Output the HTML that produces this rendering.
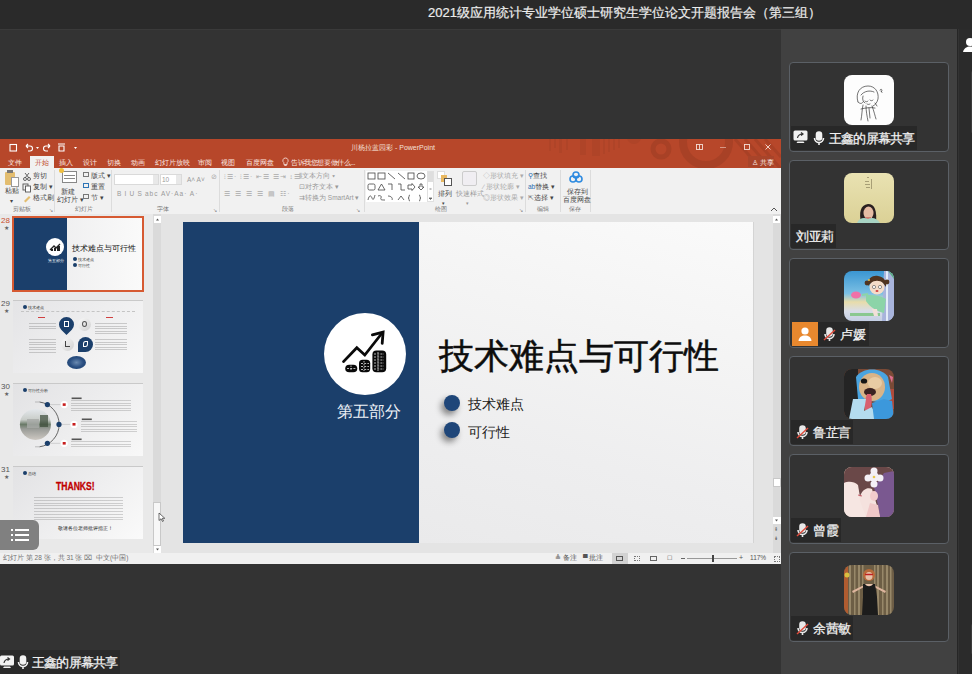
<!DOCTYPE html>
<html><head><meta charset="utf-8">
<style>
*{margin:0;padding:0;box-sizing:border-box}
html,body{width:972px;height:674px;overflow:hidden;background:#333333;font-family:"Liberation Sans",sans-serif}
.a{position:absolute}
#top{left:0;top:0;width:972px;height:29px;background:#2a2a2a}
#title{left:428px;top:5px;font-size:13px;color:#ececec;white-space:nowrap;line-height:16px;-webkit-text-stroke:0.2px #ececec}
#panel{left:781px;top:29px;width:176px;height:645px;background:#414141}
#strip{left:957px;top:29px;width:15px;height:645px;background:#2b2b2b;border-left:1px solid #262626;box-shadow:inset 1px 0 0 #333}
.card{left:789px;width:160px;height:90px;border:1px solid #5b6066;border-radius:4px;background:#333333}
.av{left:54px;top:12px;width:50px;height:50px;border-radius:8px;overflow:hidden}
.lab{left:1px;top:63px;height:24px;background:#282828;color:#f2f2f2;font-size:13px;line-height:24px;white-space:nowrap}
.lab span{line-height:25px;top:0;-webkit-text-stroke:0.25px #f2f2f2}
/* ppt */
#ppt{left:0;top:139px;width:781px;height:425px;background:#e6e6e6;overflow:hidden}
#tbar{left:0;top:0;width:781px;height:29px;background:#b7472a}
#ribbon{left:0;top:29px;width:781px;height:47px;background:#f1f1f1;border-bottom:1px solid #d6d6d6}
#thumbs{left:0;top:75px;width:153px;height:339px;background:#e9e9e9}
#sb1{left:153px;top:75px;width:8px;height:339px;background:#dadada}
#stage{left:161px;top:75px;width:620px;height:339px;background:#e4e4e4}
#slide{left:183px;top:83px;width:570px;height:321px;background:linear-gradient(15deg,#e8e8e9 0%,#eeeeef 40%,#f4f4f4 70%,#fafafa 100%);box-shadow:1px 0 0 #d4d4d4}
#status{left:0;top:414px;width:781px;height:11px;background:#f0f0f0}
.t{color:#444;font-size:7px;white-space:nowrap;line-height:8px}
</style></head><body>
<div id="top" class="a"></div>
<div class="a" style="left:0;top:29px;width:781px;height:1px;background:#3a3a3a"></div>
<div id="title" class="a">2021级应用统计专业学位硕士研究生学位论文开题报告会（第三组）</div>

<div id="ppt" class="a">
  <div id="tbar" class="a">
    <svg class="a" style="left:0;top:0" width="781" height="29">
      <g fill="#a94227" opacity="0.55">
        <rect x="549" y="0" width="2" height="12"/><rect x="554" y="0" width="2" height="9"/><rect x="559" y="0" width="3" height="14"/>
        <rect x="566" y="0" width="2" height="11"/><rect x="580" y="0" width="6" height="16"/><rect x="592" y="0" width="8" height="17"/>
        <rect x="603" y="0" width="2" height="15"/><rect x="608" y="0" width="2" height="13"/><rect x="613" y="0" width="2" height="11"/><rect x="618" y="0" width="2" height="9"/>
        <circle cx="634" cy="-2" r="7"/>
      </g>
      <g fill="none" stroke="#a43f25" opacity="0.75">
        <circle cx="661" cy="10" r="8" stroke-width="5"/>
        <circle cx="706" cy="3" r="23" stroke-width="8"/>
        <path d="M735 0 L760 29 M745 0 L770 29 M755 0 L780 29 M765 0 L781 18" stroke-width="3"/>
      </g>
    </svg>
  </div>
  <!-- QAT -->
  <svg class="a" style="left:0;top:0" width="90" height="17">
    <g fill="none" stroke="#fff" stroke-width="1.1">
      <rect x="10" y="5.5" width="6.5" height="6.5"/>
      <path d="M26 7 l2 -2 M26 7 l2 2 M26 7 h4 a2.5 2.5 0 0 1 0 5 h-2"/>
      <path d="M50 7 l-2 -2 M50 7 l-2 2 M50 7 h-4 a2.5 2.5 0 0 0 0 5 h2"/>
      <path d="M58 5 h7 M59 7 h5 v5 h-5 z"/>
    </g>
    <g fill="#fff"><path d="M36 8 h3 l-1.5 2 z"/><path d="M74 8 h3 l-1.5 2 z"/></g>
  </svg>
  <div class="a t" style="left:351px;top:5px;color:#f5e0d8;font-size:7px">川杨拉蓝园彩 - PowerPoint</div>
  <svg class="a" style="left:690px;top:0" width="91" height="17">
    <g fill="none" stroke="#f4ded6" stroke-width="0.9">
      <rect x="6.5" y="5.5" width="6" height="5"/><path d="M9.5 5.5 v5"/>
      <path d="M30 8.5 h6" opacity=".6"/>
      <rect x="54.5" y="5.5" width="5" height="5"/>
      <path d="M75.5 5.5 l5 5 M80.5 5.5 l-5 5"/>
    </g>
  </svg>
  <!-- tabs -->
  <div class="a" style="left:30px;top:17px;width:24px;height:12px;background:#f1f1f1"></div>
  <div class="a t" style="left:8px;top:20px;color:#fbe9e3">文件</div>
  <div class="a t" style="left:35px;top:20px;color:#c0492b">开始</div>
  <div class="a t" style="left:59px;top:20px;color:#fbe9e3">插入</div>
  <div class="a t" style="left:83px;top:20px;color:#fbe9e3">设计</div>
  <div class="a t" style="left:107px;top:20px;color:#fbe9e3">切换</div>
  <div class="a t" style="left:131px;top:20px;color:#fbe9e3">动画</div>
  <div class="a t" style="left:155px;top:20px;color:#fbe9e3">幻灯片放映</div>
  <div class="a t" style="left:198px;top:20px;color:#fbe9e3">审阅</div>
  <div class="a t" style="left:221px;top:20px;color:#fbe9e3">视图</div>
  <div class="a t" style="left:246px;top:20px;color:#fbe9e3">百度网盘</div>
  <svg class="a" style="left:282px;top:18px" width="7" height="10"><path d="M3.5 1 a2.6 2.6 0 0 1 1.6 4.7 v1.8 h-3.2 v-1.8 a2.6 2.6 0 0 1 1.6 -4.7z M2.3 8.5 h2.4" fill="none" stroke="#fbe9e3" stroke-width=".8"/></svg><div class="a t" style="left:291px;top:20px;color:#fbe9e3;letter-spacing:-0.4px">告诉我您想要做什么...</div>
  <div class="a" style="left:748px;top:17px;width:26px;height:11px;background:#a8442a"></div>
  <div class="a t" style="left:752px;top:20px;color:#fbe9e3">♙ 共享</div>

  <div id="ribbon" class="a">
    <!-- separators -->
    <div class="a" style="left:54px;top:2px;width:1px;height:42px;background:#dcdcdc"></div>
    <div class="a" style="left:111px;top:2px;width:1px;height:42px;background:#dcdcdc"></div>
    <div class="a" style="left:219px;top:2px;width:1px;height:42px;background:#dcdcdc"></div>
    <div class="a" style="left:364px;top:2px;width:1px;height:42px;background:#dcdcdc"></div>
    <div class="a" style="left:525px;top:2px;width:1px;height:42px;background:#dcdcdc"></div>
    <div class="a" style="left:560px;top:2px;width:1px;height:42px;background:#dcdcdc"></div>
    <div class="a" style="left:590px;top:2px;width:1px;height:42px;background:#dcdcdc"></div>
    <!-- clipboard -->
    <div class="a" style="left:5px;top:4px;width:10px;height:13px;background:#e3bd6f;border-radius:1px"></div>
    <div class="a" style="left:7px;top:2px;width:6px;height:3px;background:#777"></div>
    <div class="a" style="left:11px;top:9px;width:8px;height:10px;background:#fff;border:1px solid #999"></div>
    <div class="a t" style="left:5px;top:19px;font-size:6.5px">粘贴</div>
    <div class="a t" style="left:10px;top:29px;font-size:6px">▾</div>
    <svg class="a" style="left:22px;top:3px" width="10" height="32"><g fill="none" stroke="#555" stroke-width="0.9"><circle cx="3" cy="8" r="1.5"/><circle cx="7" cy="8" r="1.5"/><path d="M3 2 l4 5 M7 2 l-4 5"/><rect x="1" y="13" width="5" height="6"/><rect x="3.5" y="15" width="5" height="6" fill="#fff"/></g><path d="M2 30 l5 -5 l1.5 1.5 l-5 5z" fill="#e3bd6f"/></svg>
    <div class="a t" style="left:33px;top:4px;font-size:6.5px">剪切</div>
    <div class="a t" style="left:33px;top:15px;font-size:6.5px">复制 ▾</div>
    <div class="a t" style="left:33px;top:26px;font-size:6.5px">格式刷</div>
    <div class="a t" style="left:13px;top:37px;font-size:6px;color:#777">剪贴板</div>
    <div class="a t" style="left:49px;top:38px;font-size:5px;color:#888">↘</div>
    <!-- slides -->
    <div class="a" style="left:62px;top:3px;width:15px;height:12px;background:#fff;border:1px solid #888"></div>
    <div class="a" style="left:64px;top:7px;width:11px;height:1px;background:#888"></div>
    <div class="a" style="left:64px;top:10px;width:11px;height:1px;background:#888"></div>
    <div class="a" style="left:59px;top:0px;width:5px;height:5px;background:#f0c040;border-radius:50%"></div>
    <div class="a t" style="left:61px;top:20px;font-size:6.5px">新建</div>
    <div class="a t" style="left:57px;top:28px;font-size:6.5px">幻灯片 ▾</div>
    <div class="a" style="left:83px;top:4px;width:6px;height:5px;border:1px solid #777"></div>
    <div class="a t" style="left:91px;top:4px;font-size:6.5px">版式 ▾</div>
    <div class="a" style="left:83px;top:15px;width:6px;height:5px;border:1px solid #2e75b6;border-top-color:#2e75b6"></div>
    <div class="a t" style="left:91px;top:15px;font-size:6.5px">重置</div>
    <div class="a" style="left:83px;top:26px;width:6px;height:5px;border:1px solid #777"></div>
    <div class="a t" style="left:91px;top:26px;font-size:6.5px">节 ▾</div>
    <div class="a t" style="left:75px;top:37px;font-size:6px;color:#777">幻灯片</div>
    <!-- font -->
    <div class="a" style="left:114px;top:6px;width:45px;height:11px;background:#fff;border:1px solid #dadada"></div>
    <div class="a" style="left:153px;top:7px;width:5px;height:9px;background:#e8e8e8"></div>
    <div class="a" style="left:160px;top:6px;width:22px;height:11px;background:#fff;border:1px solid #dadada"></div>
    <div class="a" style="left:176px;top:7px;width:5px;height:9px;background:#e8e8e8"></div>
    <div class="a t" style="left:162px;top:8px;font-size:6.5px;color:#999">10</div>
    <div class="a t" style="left:187px;top:8px;font-size:6.5px;color:#999">A˄ A˅</div>
    <div class="a t" style="left:211px;top:5px;font-size:6.5px;color:#aaa">⊘</div>
    <div class="a t" style="left:117px;top:22px;font-size:6.5px;color:#999;letter-spacing:3.2px">BIUS<span style="letter-spacing:1px">abc AV·Aa· A·</span></div>
    <div class="a t" style="left:157px;top:37px;font-size:6px;color:#777">字体</div>
    <div class="a t" style="left:213px;top:38px;font-size:5px;color:#888">↘</div>
    <!-- paragraph -->
    <div class="a t" style="left:224px;top:5px;font-size:6.5px;color:#aaa;letter-spacing:1px">⁝☰· ⁝☰· ⇤☰ ☰⇥ ↕☰·</div>
    <div class="a t" style="left:224px;top:22px;font-size:7px;color:#aaa;letter-spacing:1.5px">☰ ☰ ☰ ☰ ▤ ☷·</div>
    <div class="a t" style="left:299px;top:4px;font-size:6.5px;color:#999">⫼文本方向 ▾</div>
    <div class="a t" style="left:299px;top:15px;font-size:6.5px;color:#999">⊡对齐文本 ▾</div>
    <div class="a t" style="left:299px;top:26px;font-size:6.5px;color:#999">⇉转换为 SmartArt ▾</div>
    <div class="a t" style="left:282px;top:37px;font-size:6px;color:#777">段落</div>
    <div class="a t" style="left:356px;top:38px;font-size:5px;color:#888">↘</div>
    <!-- drawing -->
    <div class="a" style="left:366px;top:3px;width:61px;height:31px;background:#fff"></div>
    <svg class="a" style="left:367px;top:4px" width="60" height="30"><g fill="none" stroke="#444" stroke-width="0.8">
      <rect x="1" y="1" width="7" height="6"/><rect x="11" y="1" width="7" height="6"/><path d="M21 1 l7 6 M31 1 l7 6"/><rect x="41" y="1" width="6" height="6"/><ellipse cx="54" cy="4" rx="4" ry="3"/>
      <rect x="1" y="12" width="7" height="6" rx="1.5"/><path d="M11 18 l3.5 -6 l3.5 6z M21 12 h4 v6 M31 12 h3 v6 h4"/><path d="M41 13 h4 v-1.5 l3 3.5 l-3 3.5 v-1.5 h-4z"/><path d="M53 12 v3 h-2 l3 3 l3 -3 h-2 v-3z"/>
      <path d="M1 28 c1-5 3-5 4-2 c1 3 2 1 3-3 M11 24 c2-1 4 0 3 2 c-1 2 1 2 4 2 M21 24 c3 0 5 2 4 4 M31 28 l3-4 l3 4 M43 23 c-2 0 0 3 -2 3 c2 0 0 3 2 3 M52 23 c2 0 0 3 2 3 c-2 0 0 3-2 3"/>
    </g></svg>
    <div class="a" style="left:427px;top:3px;width:7px;height:31px;background:#fff;border:1px solid #e0e0e0"></div><div class="a" style="left:428px;top:4px;width:5px;height:10px;background:#dedede"></div><svg class="a" style="left:427px;top:3px" width="7" height="31"><path d="M2.5 18 h2 M2 27 l1.5 1.5 l1.5 -1.5z" stroke="#666" stroke-width=".8" fill="#666"/></svg>
    <div class="a" style="left:437px;top:3px;width:8px;height:8px;background:#fff;border:1px solid #ddd"></div>
    <div class="a" style="left:441px;top:7px;width:6px;height:7px;background:#e8b860"></div>
    <div class="a" style="left:444px;top:10px;width:8px;height:8px;background:#fff;border:1px solid #555"></div>
    <div class="a t" style="left:438px;top:22px;font-size:6.5px">排列</div>
    <div class="a t" style="left:442px;top:31px;font-size:5px">▾</div>
    <div class="a" style="left:462px;top:3px;width:15px;height:15px;background:#f0eef2;border:1px solid #ccc;border-radius:2px"></div>
    <div class="a t" style="left:456px;top:22px;font-size:6.5px;color:#999">快速样式</div>
    <div class="a t" style="left:466px;top:31px;font-size:5px;color:#999">▾</div>
    <div class="a t" style="left:483px;top:4px;font-size:6.5px;color:#aaa">◇形状填充 ▾</div>
    <div class="a t" style="left:483px;top:15px;font-size:6.5px;color:#aaa">∕ 形状轮廓 ▾</div>
    <div class="a t" style="left:483px;top:26px;font-size:6.5px;color:#aaa">◎形状效果 ▾</div>
    <div class="a t" style="left:435px;top:37px;font-size:6px;color:#777">绘图</div>
    <div class="a t" style="left:519px;top:38px;font-size:5px;color:#888">↘</div>
    <!-- editing -->
    <div class="a t" style="left:528px;top:4px;font-size:6.5px"><span style="color:#2b6cb0">⚲</span>查找</div>
    <div class="a t" style="left:528px;top:15px;font-size:6.5px"><span style="color:#2b6cb0">ab</span>替换 ▾</div>
    <div class="a t" style="left:528px;top:26px;font-size:6.5px"><span style="color:#777">⇱</span>选择 ▾</div>
    <div class="a t" style="left:537px;top:37px;font-size:6px;color:#777">编辑</div>
    <!-- baidu -->
    <svg class="a" style="left:569px;top:3px" width="14" height="12"><g fill="none" stroke="#2f8be0" stroke-width="1.6"><circle cx="7" cy="4" r="3"/><circle cx="4" cy="8" r="3"/><circle cx="10" cy="8" r="3"/></g></svg>
    <div class="a t" style="left:567px;top:20px;font-size:6.5px">保存到</div>
    <div class="a t" style="left:563px;top:28px;font-size:6.5px">百度网盘</div>
    <div class="a t" style="left:569px;top:37px;font-size:6px;color:#777">保存</div>
    <svg class="a" style="left:770px;top:38px" width="8" height="6"><path d="M1 5 l3 -3 l3 3" fill="none" stroke="#555" stroke-width="1"/></svg>
  </div>
  <div id="thumbs" class="a"></div>
  <div id="sb1" class="a"></div>
  <div class="a" style="left:154px;top:77px;width:7px;height:7px;background:#fff"></div>
  <svg class="a" style="left:154px;top:77px" width="7" height="7"><path d="M2 4.5 l1.5 -2 l1.5 2z" fill="#555"/></svg>
  <div class="a" style="left:153px;top:363px;width:8px;height:44px;background:#f7f7f7;border:1px solid #c8c8c8"></div>
  <div class="a" style="left:154px;top:407px;width:7px;height:7px;background:#fff"></div>
  <svg class="a" style="left:154px;top:407px" width="7" height="7"><path d="M2 2.5 l1.5 2 l1.5 -2z" fill="#555"/></svg>
  <div id="stage" class="a"></div>
  <!-- right scrollbar -->
  <div class="a" style="left:773px;top:75px;width:8px;height:339px;background:#dadada"></div>
  <div class="a" style="left:773px;top:77px;width:7px;height:7px;background:#fff"></div>
  <svg class="a" style="left:773px;top:77px" width="7" height="7"><path d="M2 4.5 l1.5 -2 l1.5 2z" fill="#555"/></svg>
  <div class="a" style="left:773px;top:339px;width:8px;height:9px;background:#fff;border:1px solid #c8c8c8"></div>
  <div class="a" style="left:773px;top:378px;width:8px;height:7px;background:#fff"></div>
  <svg class="a" style="left:773px;top:378px" width="7" height="7"><path d="M2 2.5 l1.5 2 l1.5 -2z" fill="#555"/></svg>
  <div class="a t" style="left:774px;top:386px;font-size:5px;color:#555">⇞</div>
  <div class="a t" style="left:774px;top:395px;font-size:5px;color:#555">⇟</div>

  <!-- thumbnails -->
  <div class="a t" style="left:1px;top:78px;font-size:8px;color:#c9502e">28</div>
  <div class="a t" style="left:4px;top:85px;font-size:6px;color:#666">★</div>
  <div class="a" style="left:12px;top:77px;width:132px;height:76px;border:2px solid #d65a32"></div>
  <div class="a" style="left:14px;top:79px;width:128px;height:72px;background:linear-gradient(90deg,#e9e9ea,#fafafa);overflow:hidden">
    <div class="a" style="left:0;top:0;width:53px;height:72px;background:#1b3f6b"></div>
    <div class="a" style="left:32px;top:20px;width:18px;height:18px;border-radius:50%;background:#fff"></div>
    <svg class="a" style="left:34px;top:23px" width="14" height="12"><path d="M2 9 l4-4 l2 2 l4-4" fill="none" stroke="#222" stroke-width="1.3"/><rect x="3" y="8" width="2" height="2" fill="#222"/><rect x="6" y="7" width="2" height="3" fill="#222"/><rect x="9" y="5" width="3" height="5" fill="#222"/></svg>
    <div class="a t" style="left:34px;top:39px;font-size:4px;color:#fff">第五部分</div>
    <div class="a t" style="left:58px;top:26px;font-size:8px;color:#111;line-height:10px">技术难点与可行性</div>
    <div class="a" style="left:59px;top:39px;width:4px;height:4px;border-radius:50%;background:#1b3f6b"></div>
    <div class="a t" style="left:64px;top:38px;font-size:4px;color:#333">技术难点</div>
    <div class="a" style="left:59px;top:45px;width:4px;height:4px;border-radius:50%;background:#1b3f6b"></div>
    <div class="a t" style="left:64px;top:44px;font-size:4px;color:#333">可行性</div>
  </div>

  <div class="a t" style="left:1px;top:161px;font-size:8px;color:#555">29</div>
  <div class="a t" style="left:4px;top:168px;font-size:6px;color:#666">★</div>
  <div class="a" style="left:13px;top:161px;width:130px;height:73px;background:linear-gradient(135deg,#e4e4e6,#f8f8f8);overflow:hidden;box-shadow:inset 0 1px 0 #c9c9c9">
    <div class="a" style="left:10px;top:5px;width:4px;height:4px;border-radius:50%;background:#1b3f6b"></div>
    <div class="a t" style="left:15px;top:4px;font-size:4px;color:#333">技术难点</div>
    <div class="a" style="left:8px;top:11px;width:114px;border-top:1px dashed #c4c4c4"></div>
    <div class="a" style="left:25px;top:17px;width:7px;height:1px;background:#d04040"></div>
    <div class="a" style="left:93px;top:17px;width:7px;height:1px;background:#d04040"></div>
    <div class="a" style="left:16px;top:23px;width:27px;height:8px;background:repeating-linear-gradient(180deg,#555 0 1px,transparent 1px 2.6px);opacity:.26"></div><div class="a" style="left:16px;top:39px;width:27px;height:14px;background:repeating-linear-gradient(180deg,#555 0 1px,transparent 1px 2.6px);opacity:.26"></div><div class="a" style="left:82px;top:23px;width:32px;height:11px;background:repeating-linear-gradient(180deg,#555 0 1px,transparent 1px 2.6px);opacity:.26"></div><div class="a" style="left:82px;top:39px;width:32px;height:13px;background:repeating-linear-gradient(180deg,#555 0 1px,transparent 1px 2.6px);opacity:.26"></div>
    <div class="a" style="left:46px;top:17px;width:15px;height:15px;border-radius:50% 50% 50% 0;transform:rotate(-45deg);background:#1b3f6b"></div>
    <div class="a" style="left:65px;top:18px;width:13px;height:13px;border-radius:50%;background:linear-gradient(135deg,#fafafa,#cfcfcf)"></div>
    <div class="a" style="left:48px;top:38px;width:13px;height:13px;border-radius:50%;background:linear-gradient(135deg,#fafafa,#cfcfcf)"></div>
    <div class="a" style="left:65px;top:37px;width:15px;height:15px;border-radius:50% 50% 50% 0;background:#1b3f6b"></div>
    <div class="a" style="left:51px;top:21px;width:5px;height:6px;border:1px solid #fff"></div>
    <div class="a" style="left:69px;top:21px;width:5px;height:6px;border:1px solid #555;border-radius:50%"></div>
    <div class="a" style="left:52px;top:41px;width:5px;height:6px;border-bottom:1px solid #444;border-left:1px solid #444"></div>
    <div class="a" style="left:70px;top:41px;width:5px;height:6px;border:1px solid #fff;border-radius:50% 0"></div>
    <div class="a" style="left:54px;top:56px;width:19px;height:13px;border-radius:50%;background:radial-gradient(ellipse at 50% 50%,#6a8ab0 0,#2a4f82 50%,#1b3f6b 100%)"></div>
  </div>

  <div class="a t" style="left:1px;top:244px;font-size:8px;color:#555">30</div>
  <div class="a t" style="left:4px;top:251px;font-size:6px;color:#666">★</div>
  <div class="a" style="left:13px;top:244px;width:130px;height:73px;background:linear-gradient(135deg,#e2e2e4,#f8f8f8);overflow:hidden;box-shadow:inset 0 1px 0 #c9c9c9">
    <div class="a" style="left:10px;top:5px;width:4px;height:4px;border-radius:50%;background:#1b3f6b"></div>
    <div class="a t" style="left:15px;top:4px;font-size:4px;color:#333">可行性分析</div>
    <svg class="a" style="left:0;top:0" width="130" height="73">
      <defs><linearGradient id="ph" x1="0" y1="0" x2="0" y2="1"><stop offset="0" stop-color="#e4e8ec"/><stop offset=".35" stop-color="#c8ccc8"/><stop offset=".5" stop-color="#6a7a68"/><stop offset=".65" stop-color="#9a9c98"/><stop offset="1" stop-color="#cdc8c2"/></linearGradient></defs>
      <circle cx="22.4" cy="41.4" r="15.5" fill="url(#ph)"/>
      <rect x="14" y="36" width="12" height="9" fill="#a8aaa8" opacity=".8"/><rect x="27" y="32" width="8" height="12" fill="#3a4a38" opacity=".7"/>
      <path d="M26.5 19 A22.6 22.6 0 0 1 26.5 63.8" fill="none" stroke="#444" stroke-width=".8"/><path d="M22 19 h4.5 M22 63.8 h4.5" stroke="#999" stroke-width=".6"/>
      <path d="M34 21.6 H51 M46 41.4 H61 M34 60.3 H51" stroke="#bbb" stroke-width=".6"/>
      <g fill="#1b3f6b"><circle cx="34.4" cy="21.6" r="2.6"/><circle cx="46" cy="41.4" r="2.6"/><circle cx="34.4" cy="60.3" r="2.6"/></g>
      <g fill="#fff"><circle cx="51.2" cy="21.6" r="3.6"/><circle cx="61" cy="41.4" r="3.6"/><circle cx="51.2" cy="60.3" r="3.6"/></g>
      <g fill="#c81e1e"><rect x="49.7" y="20.3" width="3" height="2.6"/><rect x="59.5" y="40" width="3" height="2.6"/><rect x="49.7" y="59" width="3" height="2.6"/></g>
      <g fill="#555"><rect x="58.6" y="14.5" width="10" height="1.6"/><rect x="68.8" y="35.5" width="10" height="1.6"/><rect x="58.6" y="55.5" width="10" height="1.6"/></g>
    </svg>
    <div class="a" style="left:58px;top:17px;width:60px;height:13px;background:repeating-linear-gradient(180deg,#555 0 1px,transparent 1px 2.6px);opacity:.24"></div><div class="a" style="left:68px;top:38px;width:56px;height:13px;background:repeating-linear-gradient(180deg,#555 0 1px,transparent 1px 2.6px);opacity:.24"></div><div class="a" style="left:58px;top:58px;width:60px;height:8px;background:repeating-linear-gradient(180deg,#555 0 1px,transparent 1px 2.6px);opacity:.24"></div>
  </div>

  <div class="a t" style="left:1px;top:327px;font-size:8px;color:#555">31</div>
  <div class="a t" style="left:4px;top:334px;font-size:6px;color:#666">★</div>
  <div class="a" style="left:13px;top:327px;width:130px;height:73px;background:linear-gradient(135deg,#e2e2e4,#fafafa);overflow:hidden;box-shadow:inset 0 1px 0 #c9c9c9">
    <div class="a" style="left:10px;top:5px;width:4px;height:4px;border-radius:50%;background:#1b3f6b"></div>
    <div class="a t" style="left:15px;top:4px;font-size:4px;color:#333">总结</div>
    <div class="a t" style="left:43px;top:14px;font-size:11px;line-height:12px;color:#c00000;font-weight:bold;transform:scaleX(.78);transform-origin:0 0;-webkit-text-stroke:.3px #c00000">THANKS!</div>
    <div class="a" style="left:21px;top:31px;width:89px;height:23px;background:repeating-linear-gradient(180deg,#555 0 1px,transparent 1px 2.8px);opacity:.24"></div>
    <div class="a t" style="left:45px;top:59px;font-size:4.5px;color:#222">敬请各位老师批评指正！</div>
  </div>
  <svg class="a" style="left:158px;top:373px" width="8" height="11"><path d="M1 1 L1 8.5 L3 6.8 L4.5 9.5 L5.5 9 L4.2 6.3 L6.8 6.3 Z" fill="#fff" stroke="#333" stroke-width=".7" stroke-linejoin="round"/></svg>
  <!-- overlay list button -->
  <div class="a" style="left:0px;top:381px;width:39px;height:30px;background:rgba(118,118,118,.92);border-radius:0 6px 6px 0"></div>
  <svg class="a" style="left:9px;top:386px" width="22" height="20"><g fill="#fff"><rect x="2" y="4" width="2" height="2"/><rect x="6" y="4" width="14" height="2"/><rect x="2" y="9" width="2" height="2"/><rect x="6" y="9" width="14" height="2"/><rect x="2" y="14" width="2" height="2"/><rect x="6" y="14" width="14" height="2"/></g></svg>

  <!-- main slide -->
  <div id="slide" class="a">
    <div class="a" style="left:0;top:0;width:236px;height:321px;background:#1b3f6b"></div>
    <div class="a" style="left:141px;top:91px;width:82px;height:82px;border-radius:50%;background:#fff"></div>
    <svg class="a" style="left:141px;top:91px" width="82" height="82">
      <path d="M19.5 48.6 L32.8 34.8 L40.8 42 L57.3 21" fill="none" stroke="#0a0a0a" stroke-width="2.8" stroke-linecap="round" stroke-linejoin="miter"/>
      <path d="M48.4 21.9 L59.1 19.2 L58.2 30.4" fill="none" stroke="#0a0a0a" stroke-width="2.8" stroke-linecap="round" stroke-linejoin="miter"/>
      <g fill="#0a0a0a">
        <rect x="21.2" y="51.7" width="12.1" height="7.6" rx="4"/>
        <rect x="35" y="46.8" width="11.2" height="12.5" rx="3.5"/>
        <rect x="48.4" y="37.5" width="13.8" height="21.8" rx="4"/>
      </g>
      <g stroke="#fff" stroke-width="0.7" fill="none" stroke-dasharray="2 1.2">
        <path d="M23 55.5 h9 M37 50.5 h8 M37 53.5 h8 M37 56.5 h8 M50 41 h10 M50 44 h10 M50 47 h10 M50 50 h10 M50 53 h10 M50 56 h10"/>
        <path d="M27 52.5 v6 M40 48 v10 M54 39 v19" stroke-dasharray="1.5 1.5"/>
      </g>
    </svg>
    <div class="a" style="left:154px;top:180px;font-size:16px;line-height:20px;color:#eef2f7;white-space:nowrap">第五部分</div>
    <div class="a" style="left:256px;top:114px;font-size:35px;line-height:40px;color:#0d0d0d;white-space:nowrap;-webkit-text-stroke:0.5px #0d0d0d">技术难点与可行性</div>
    <div class="a" style="left:261px;top:173px;width:16px;height:16px;border-radius:50%;background:#1f4679;box-shadow:-3px 4px 6px rgba(0,0,0,.45)"></div>
    <div class="a" style="left:261px;top:200px;width:16px;height:16px;border-radius:50%;background:#1f4679;box-shadow:-3px 4px 6px rgba(0,0,0,.45)"></div>
    <div class="a" style="left:285px;top:175px;font-size:14px;line-height:16px;color:#222;white-space:nowrap;font-family:'Liberation Serif',serif">技术难点</div>
    <div class="a" style="left:285px;top:203px;font-size:14px;line-height:16px;color:#222;white-space:nowrap;font-family:'Liberation Serif',serif">可行性</div>
  </div>
  <div id="status" class="a">
    <div class="a t" style="left:3px;top:1px;font-size:6.5px;color:#707070">幻灯片 第 28 张，共 31 张</div>
    <div class="a t" style="left:84px;top:1px;font-size:6.5px;color:#707070">⌧</div>
    <div class="a t" style="left:96px;top:1px;font-size:6.5px;color:#707070">中文(中国)</div>
    <div class="a t" style="left:555px;top:1px;font-size:6.5px;color:#555">≜ 备注</div>
    <div class="a t" style="left:583px;top:1px;font-size:6.5px;color:#555">▀ 批注</div>
    <div class="a" style="left:612px;top:0;width:16px;height:11px;background:#d2d2d2"></div>
    <div class="a" style="left:616px;top:3px;width:7px;height:5px;border:1px solid #555"></div>
    <div class="a" style="left:634px;top:3px;width:6px;height:5px;border:1px dotted #777"></div>
    <div class="a" style="left:650px;top:3px;width:7px;height:5px;border:1px solid #666;border-top-width:1px"></div>
    <div class="a t" style="left:667px;top:1px;font-size:6px;color:#555">☐</div>
    <div class="a" style="left:681px;top:5px;width:4px;height:1px;background:#666"></div>
    <div class="a" style="left:687px;top:5px;width:50px;height:1px;background:#999"></div>
    <div class="a" style="left:712px;top:2px;width:2px;height:7px;background:#444"></div>
    <div class="a t" style="left:739px;top:1px;font-size:7px;color:#555">+</div>
    <div class="a t" style="left:750px;top:1px;font-size:6.5px;color:#555">117%</div>
    <div class="a" style="left:774px;top:3px;width:6px;height:6px;border:1px solid #777;border-style:dotted"></div>
  </div>
</div>

<div id="panel" class="a"></div>
<div id="strip" class="a"></div>

<div class="a card" style="top:62px"><div class="a av"><div class="a" style="left:0;top:0;width:50px;height:50px;background:#fdfdfd"></div><svg class="a" style="left:0;top:0" width="50" height="50"><g fill="none" stroke="#2a2a2a" stroke-width="0.65" stroke-linecap="round">
<path d="M14 27 C11 18 16 11 24 11 C31 11 35 17 34 24 C33 28 31 30 29 31"/>
<path d="M14 27 C16 29 18 29 19 27 M17 20 C20 16 26 15 30 17 M19 21 C18 24 19 27 21 28"/>
<path d="M21 26 c1 1 2 1 3 0 M26 25 c1 1 2 1 3 0 M23 29 c1 .6 2 .6 3 0"/>
<path d="M19 30 C18 34 18 40 17 45 M22 31 C22 36 23 41 24 46 M28 31 C30 36 31 41 32 44 M25 33 L26 43 M17 34 C21 33 27 32 31 33"/>
<path d="M31 28 l2 3 M36 15 c1-2 3 0 1.5 1.5 M37 16 l1 1.5"/></g></svg></div><div class="a lab" style="width:126px"><svg class="a" style="left:2px;top:4px" width="15" height="16"><rect x="0.5" y="0.5" width="14" height="10" rx="1.5" fill="#f2f2f2"/><path d="M4.5 8 c0.5-3 2.5-4 5-4 M8 2.5 l2 1.5 l-2 1.5" fill="none" stroke="#333" stroke-width="1.2"/><path d="M3.5 13 h8 l-1 -1.5 h-6z" fill="#f2f2f2"/></svg><svg class="a" style="left:22px;top:5px" width="12" height="15"><g fill="none" stroke="#f2f2f2" stroke-width="1.6"><rect x="3.5" y="1" width="5" height="8" rx="2.5" fill="#f2f2f2"/><path d="M1.5 7 a4.5 4.5 0 0 0 9 0 M6 11.5 v2.5"/></g></svg><span class="a" style="left:38px;top:0;letter-spacing:-0.8px">王鑫的屏幕共享</span></div></div>
<div class="a card" style="top:160px"><div class="a av"><svg class="a" style="left:0;top:0" width="50" height="50">
<defs><linearGradient id="g2" x1="0" y1="0" x2="0" y2="1"><stop offset="0" stop-color="#e9e2b2"/><stop offset="1" stop-color="#dbd196"/></linearGradient></defs><rect width="50" height="50" fill="url(#g2)"/>
<g fill="#6a6040" opacity=".5"><rect x="23" y="4" width="2" height="1"/><rect x="21" y="8" width="4" height="1"/><rect x="21" y="11" width="5" height="1"/><rect x="22" y="14" width="4" height="1"/><rect x="27" y="6" width="1" height="10"/></g>
<path d="M17 50 C15 40 16 32 24 31 C31 31 33 38 32 50 Z" fill="#2a2020"/>
<ellipse cx="24.5" cy="40" rx="5" ry="6.5" fill="#e6bca4"/><path d="M21 45 l6 0" stroke="#c04040" stroke-width="1"/>
<path d="M13 50 C15 45 20 44 24 46 C28 44 33 45 36 50 Z" fill="#a8d4c4"/>
</svg></div><div class="a lab" style="width:45px"><span class="a" style="left:5px;top:0;letter-spacing:-0.5px">刘亚莉</span></div></div>
<div class="a card" style="top:258px"><div class="a av"><svg class="a" style="left:0;top:0" width="50" height="50">
<defs><linearGradient id="sky" x1="0" y1="0" x2="0" y2="1"><stop offset="0" stop-color="#3a96d2"/><stop offset=".45" stop-color="#7cc0e4"/><stop offset=".62" stop-color="#e8dcaa"/><stop offset=".8" stop-color="#d8dde8"/><stop offset="1" stop-color="#c4cfe4"/></linearGradient></defs>
<rect width="50" height="50" fill="url(#sky)"/>
<path d="M40 0 H50 V50 H38 Z" fill="#a8b4dc"/><path d="M42 0 h2 v50 h-2z" fill="#e4ecf8"/><path d="M44 0 H50 V8 Z" fill="#5cae80"/>
<path d="M6 42 h30 v3 h-30z" fill="#8ac890"/>
<path d="M22 24 C27 24 36 24 42 28 L40 42 C32 40 26 36 22 30 Z" fill="#8cd4a8"/><path d="M18 24 l6 -1" stroke="#8cd4a8" stroke-width="2"/>
<circle cx="33" cy="16" r="7.5" fill="#f4dcc8"/><path d="M24 15 C23 6 30 4 34 5 C40 6 43 10 42 16 L39 12 C36 9 30 9 27 12 Z" fill="#503420"/><circle cx="23" cy="12" r="2.4" fill="#503420"/><circle cx="43" cy="11" r="2.4" fill="#503420"/><circle cx="30" cy="16" r="1.6" fill="#fff" stroke="#333" stroke-width=".5"/><circle cx="36" cy="16" r="1.6" fill="#fff" stroke="#333" stroke-width=".5"/><ellipse cx="33" cy="20" rx="1.5" ry="1" fill="#d04040"/><circle cx="25" cy="9" r="1" fill="#e8c040"/>
<ellipse cx="12" cy="24" rx="5" ry="3.5" fill="#f070a8"/>
<path d="M28 38 l2 7 l4 0 l-1 -7z" fill="#f2e0d8"/>
</svg></div><div class="a" style="left:2px;top:63px;width:26px;height:24px;background:#e8882e"></div><svg class="a" style="left:8px;top:67px" width="14" height="16"><circle cx="7" cy="5" r="3.6" fill="#fff"/><path d="M0.5 15 c0.5-4 3-5.5 6.5-5.5 s6 1.5 6.5 5.5z" fill="#fff"/></svg><div class="a lab" style="left:28px;width:51px"><svg class="a" style="left:5px;top:5px" width="13" height="15"><g fill="none" stroke="#e8e8e8" stroke-width="1.6"><rect x="4" y="1" width="5" height="8" rx="2.5" fill="#e8e8e8"/><path d="M2 7 a4.5 4.5 0 0 0 9 0 M6.5 11.5 v2.5"/></g><path d="M1 13 L12 3" stroke="#e04a3a" stroke-width="1.4"/></svg><span class="a" style="left:22px;top:0;letter-spacing:-0.5px">卢媛</span></div></div>
<div class="a card" style="top:356px"><div class="a av"><svg class="a" style="left:0;top:0" width="50" height="50">
<rect width="50" height="50" fill="#7a4a36"/><rect width="14" height="50" fill="#242424"/><rect x="40" y="20" width="10" height="20" fill="#b04a3a"/>
<path d="M12 8 C18 -2 38 -2 44 8 L48 30 L40 34 L14 30 Z" fill="#4aa4e0"/>
<path d="M45 6 l4 2 l-1 6 z" fill="#e07090"/>
<ellipse cx="28" cy="18" rx="13" ry="14" fill="#d9b488"/><ellipse cx="31" cy="14" rx="7" ry="6" fill="#e8cca4"/>
<ellipse cx="20" cy="12" rx="3.2" ry="2.6" fill="#151515"/>
<ellipse cx="26" cy="23" rx="6" ry="4" fill="#3a2222"/>
<path d="M23 25 C21 30 20 36 21 41 C23 43 26 42 27 38 C28 34 28 28 27 25 Z" fill="#d8606e"/>
<path d="M5 50 L9 30 L22 30 L20 42 L28 38 L33 50 Z" fill="#b4dcef"/>
<path d="M30 50 L28 34 L40 30 L48 32 L50 50 Z" fill="#3c98dc"/>
</svg></div><div class="a lab" style="width:62px"><svg class="a" style="left:5px;top:5px" width="13" height="15"><g fill="none" stroke="#e8e8e8" stroke-width="1.6"><rect x="4" y="1" width="5" height="8" rx="2.5" fill="#e8e8e8"/><path d="M2 7 a4.5 4.5 0 0 0 9 0 M6.5 11.5 v2.5"/></g><path d="M1 13 L12 3" stroke="#e04a3a" stroke-width="1.4"/></svg><span class="a" style="left:22px;top:0;letter-spacing:-0.5px">鲁芷言</span></div></div>
<div class="a card" style="top:454px"><div class="a av"><svg class="a" style="left:0;top:0" width="50" height="50">
<rect width="50" height="50" fill="#f5e2de"/>
<rect width="50" height="14" fill="#b08878"/>
<path d="M0 0 H50 V50 H36 C34 40 30 30 28 22 C24 20 18 22 16 30 L14 18 C10 14 4 14 0 16 Z" fill="#6a4848"/>
<path d="M36 50 C34 38 32 28 30 20 L40 6 L50 4 V50 Z" fill="#7a5890"/>
<path d="M0 16 C6 14 12 16 14 22 L16 34 L22 50 H0 Z" fill="#f6e6e2"/>
<ellipse cx="30" cy="29" rx="4" ry="5" fill="#f2cccc"/>
<path d="M22 50 L26 36 L34 38 L36 50 Z" fill="#f0c8c8"/>
<g fill="#f4f0f6"><circle cx="30" cy="10" r="5"/><circle cx="24" cy="11" r="3.5"/><circle cx="36" cy="11" r="3.5"/><circle cx="30" cy="4" r="3.5"/><circle cx="30" cy="17" r="3.5"/></g>
<circle cx="30" cy="10" r="1.3" fill="#e8c850"/>
<path d="M14 28 l4 1" stroke="#c04050" stroke-width="0.8"/>
</svg></div><div class="a lab" style="width:50px"><svg class="a" style="left:5px;top:5px" width="13" height="15"><g fill="none" stroke="#e8e8e8" stroke-width="1.6"><rect x="4" y="1" width="5" height="8" rx="2.5" fill="#e8e8e8"/><path d="M2 7 a4.5 4.5 0 0 0 9 0 M6.5 11.5 v2.5"/></g><path d="M1 13 L12 3" stroke="#e04a3a" stroke-width="1.4"/></svg><span class="a" style="left:22px;top:0;letter-spacing:-0.5px">曾霞</span></div></div>
<div class="a card" style="top:552px"><div class="a av"><svg class="a" style="left:0;top:0" width="50" height="50">
<rect width="50" height="50" fill="#6e5e46"/>
<g fill="#a09070" opacity=".85"><rect x="5" width="2" height="50"/><rect x="10" width="1.5" height="50"/><rect x="14" width="2" height="50"/><rect x="33" width="2" height="50"/><rect x="38" width="1.5" height="50"/><rect x="42" width="2" height="50"/><rect x="46" width="1.5" height="50"/><rect x="18" width="1.5" height="20"/><rect x="30" width="1.5" height="22"/></g>
<rect width="4" height="50" fill="#b05c30"/><circle cx="3" cy="10" r="2.5" fill="#d8c040"/>
<path d="M8 26 L20 20 L20 22 L9 28 Z M42 26 L30 20 L30 22 L41 28 Z" fill="#ddb49c"/>
<circle cx="25" cy="10" r="6" fill="#b86a3a"/><ellipse cx="25" cy="11" rx="3.5" ry="4" fill="#e8c0a8"/>
<path d="M21 9.5 h8" stroke="#c02020" stroke-width="1.6"/>
<path d="M19 19 L31 19 L33 32 L34 50 L18 50 L19 32 Z" fill="#1c1c1c"/>
<path d="M21 19 C23 22 27 22 29 19" fill="#e8c4ac"/>
</svg></div><div class="a lab" style="width:62px"><svg class="a" style="left:5px;top:5px" width="13" height="15"><g fill="none" stroke="#e8e8e8" stroke-width="1.6"><rect x="4" y="1" width="5" height="8" rx="2.5" fill="#e8e8e8"/><path d="M2 7 a4.5 4.5 0 0 0 9 0 M6.5 11.5 v2.5"/></g><path d="M1 13 L12 3" stroke="#e04a3a" stroke-width="1.4"/></svg><span class="a" style="left:22px;top:0;letter-spacing:-0.5px">余茜敏</span></div></div>
<div class="a" style="left:0;top:650px;width:120px;height:24px;background:#2a2a2a"></div>
<svg class="a" style="left:0;top:655px" width="15" height="16"><rect x="0" y="0.5" width="14" height="10" rx="1.5" fill="#f2f2f2"/><path d="M4 8 c0.5-3 2.5-4 5-4 M7.5 2.5 l2 1.5 l-2 1.5" fill="none" stroke="#333" stroke-width="1.2"/><path d="M3 13 h8 l-1 -1.5 h-6z" fill="#f2f2f2"/></svg>
<svg class="a" style="left:17px;top:655px" width="12" height="15"><g fill="none" stroke="#f2f2f2" stroke-width="1.6"><rect x="3.5" y="1" width="5" height="8" rx="2.5" fill="#f2f2f2"/><path d="M1.5 7 a4.5 4.5 0 0 0 9 0 M6 11.5 v2.5"/></g></svg>
<div class="a" style="left:32px;top:651px;height:24px;line-height:24px;font-size:13px;color:#f2f2f2;white-space:nowrap;letter-spacing:-0.8px;-webkit-text-stroke:0.25px #f2f2f2">王鑫的屏幕共享</div>
<svg class="a" style="left:962px;top:37px" width="10" height="16"><circle cx="8" cy="5" r="4" fill="#fff"/><path d="M1 15 c1-4 4-5.5 7-5.5 s4 1 4 1 v4.5z" fill="#fff"/></svg>
<div class="a" style="left:971px;top:71px;width:3px;height:62px;background:#3c3c3c;border-radius:2px"></div><div class="a" style="left:971px;top:624px;width:3px;height:30px;background:#3c3c3c;border-radius:2px"></div>
</body></html>
